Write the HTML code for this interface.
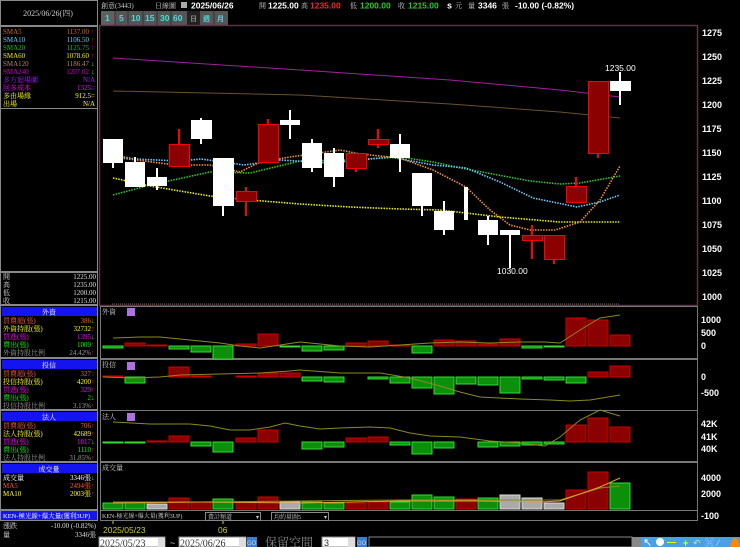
<!DOCTYPE html>
<html><head><meta charset="utf-8"><style>
html,body{margin:0;padding:0;background:#000;width:740px;height:547px;overflow:hidden}
svg{display:block;font-family:"Liberation Sans","Noto Sans CJK TC",sans-serif}
.s{font-family:"Liberation Serif","Noto Serif CJK SC",serif;font-size:7px}
.ax{font-size:9px;fill:#fff}
</style></head><body>
<svg width="740" height="547" viewBox="0 0 740 547" xmlns="http://www.w3.org/2000/svg">
<rect width="740" height="547" fill="#000"/>
<!-- left panel -->
<rect x="0.5" y="0.5" width="97" height="25" fill="#000" stroke="#888"/>
<text x="48" y="16" class="s" fill="#ccc" text-anchor="middle" style="font-size:8px">2025/06/26(四)</text>
<rect x="0.5" y="26.5" width="97" height="82" fill="#000" stroke="#888"/>
<g class="s">
<text x="3" y="34" fill="#d2691e">SMA5</text><text x="89" y="34" fill="#d2691e" text-anchor="end">1137.00</text><text x="91" y="34" fill="#f00">↑</text>
<text x="3" y="42" fill="#6cf">SMA10</text><text x="89" y="42" fill="#6cf" text-anchor="end">1106.50</text><text x="91" y="42" fill="#f00">↑</text>
<text x="3" y="50" fill="#0c0">SMA20</text><text x="89" y="50" fill="#0c0" text-anchor="end">1125.75</text><text x="91" y="50" fill="#f00">↑</text>
<text x="3" y="58" fill="#ee0">SMA60</text><text x="89" y="58" fill="#ee0" text-anchor="end">1078.60</text><text x="91" y="58" fill="#f00">↑</text>
<text x="3" y="66" fill="#b08a60">SMA120</text><text x="89" y="66" fill="#b08a60" text-anchor="end">1186.47</text><text x="91" y="66" fill="#0f0">↓</text>
<text x="3" y="74" fill="#c0c">SMA240</text><text x="89" y="74" fill="#c0c" text-anchor="end">1207.02</text><text x="91" y="74" fill="#0f0">↓</text>
<text x="3" y="82" fill="#a020f0">多方迴場圖</text><text x="95" y="82" fill="#a020f0" text-anchor="end">N/A</text>
<text x="3" y="90" fill="#f0f">回多成本</text><text x="95" y="90" fill="#f0f" text-anchor="end">1325=</text>
<text x="3" y="98" fill="#ff0">多由場緣</text><text x="95" y="98" fill="#ff0" text-anchor="end">912.5=</text>
<text x="3" y="106" fill="#ff0">出場</text><text x="95" y="106" fill="#ff0" text-anchor="end">N/A</text>
</g>
<rect x="0.5" y="108.5" width="97" height="163" fill="#000" stroke="#888"/>
<rect x="0.5" y="272.5" width="97" height="32" fill="#000" stroke="#888"/>
<g class="s" fill="#ddd">
<text x="3" y="279">開</text><text x="96" y="279" text-anchor="end">1225.00</text>
<text x="3" y="287">高</text><text x="96" y="287" text-anchor="end">1235.00</text>
<text x="3" y="295">低</text><text x="96" y="295" text-anchor="end">1200.00</text>
<text x="3" y="303">收</text><text x="96" y="303" text-anchor="end">1215.00</text>
</g>
<!-- 外資 -->
<rect x="0.5" y="305.5" width="97" height="52" fill="#000" stroke="#888"/>
<rect x="2" y="307" width="95" height="9" fill="#1414f0"/>
<g class="s">
<text x="49" y="314.5" fill="#fff" text-anchor="middle">外資</text>
<text x="3" y="323" fill="#ff5a3c">買賣超(張)</text><text x="91" y="323" fill="#ff5a3c" text-anchor="end">386</text><text x="91" y="323" fill="#0f0">↓</text>
<text x="3" y="331" fill="#ff0">外資持股(張)</text><text x="91" y="331" fill="#ff0" text-anchor="end">32732</text><text x="91" y="331" fill="#f00">↑</text>
<text x="3" y="339" fill="#f0f">買進(張)</text><text x="91" y="339" fill="#f0f" text-anchor="end">1395</text><text x="91" y="339" fill="#0f0">↓</text>
<text x="3" y="347" fill="#0f0">賣出(張)</text><text x="91" y="347" fill="#0f0" text-anchor="end">1009</text><text x="91" y="347" fill="#f00">↑</text>
<text x="3" y="355" fill="#999">外資持股比例</text><text x="91" y="355" fill="#999" text-anchor="end">24.42%</text><text x="91" y="355" fill="#f00">↑</text>
</g>
<!-- 投信 -->
<rect x="0.5" y="358.5" width="97" height="51" fill="#000" stroke="#888"/>
<rect x="2" y="360" width="95" height="9" fill="#1414f0"/>
<g class="s">
<text x="49" y="367.5" fill="#fff" text-anchor="middle">投信</text>
<text x="3" y="376" fill="#ff5a3c">買賣超(張)</text><text x="91" y="376" fill="#ff5a3c" text-anchor="end">327</text><text x="91" y="376" fill="#f00">↑</text>
<text x="3" y="384" fill="#ff0">投信持股(張)</text><text x="91" y="384" fill="#ff0" text-anchor="end">4200</text><text x="91" y="384" fill="#f00">↑</text>
<text x="3" y="392" fill="#f0f">買進(張)</text><text x="91" y="392" fill="#f0f" text-anchor="end">329</text><text x="91" y="392" fill="#f00">↑</text>
<text x="3" y="400" fill="#0f0">賣出(張)</text><text x="91" y="400" fill="#0f0" text-anchor="end">2</text><text x="91" y="400" fill="#0f0">↓</text>
<text x="3" y="408" fill="#999">投信持股比例</text><text x="91" y="408" fill="#999" text-anchor="end">3.13%</text><text x="91" y="408" fill="#f00">↑</text>
</g>
<!-- 法人 -->
<rect x="0.5" y="410.5" width="97" height="51" fill="#000" stroke="#888"/>
<rect x="2" y="412" width="95" height="9" fill="#1414f0"/>
<g class="s">
<text x="49" y="419.5" fill="#fff" text-anchor="middle">法人</text>
<text x="3" y="428" fill="#ff5a3c">買賣超(張)</text><text x="91" y="428" fill="#ff5a3c" text-anchor="end">706</text><text x="91" y="428" fill="#f00">↑</text>
<text x="3" y="436" fill="#ff0">法人持股(張)</text><text x="91" y="436" fill="#ff0" text-anchor="end">42689</text><text x="91" y="436" fill="#f00">↑</text>
<text x="3" y="444" fill="#f0f">買進(張)</text><text x="91" y="444" fill="#f0f" text-anchor="end">1817</text><text x="91" y="444" fill="#0f0">↓</text>
<text x="3" y="452" fill="#0f0">賣出(張)</text><text x="91" y="452" fill="#0f0" text-anchor="end">1110</text><text x="91" y="452" fill="#f00">↑</text>
<text x="3" y="460" fill="#999">法人持股比例</text><text x="91" y="460" fill="#999" text-anchor="end">31.85%</text><text x="91" y="460" fill="#f00">↑</text>
</g>
<!-- 成交量 -->
<rect x="0.5" y="462.5" width="97" height="47" fill="#000" stroke="#888"/>
<rect x="2" y="464" width="95" height="9" fill="#1414f0"/>
<g class="s">
<text x="49" y="471.5" fill="#fff" text-anchor="middle">成交量</text>
<text x="3" y="480" fill="#fff">成交量</text><text x="91" y="480" fill="#fff" text-anchor="end">3346張</text><text x="91" y="480" fill="#0f0">↓</text>
<text x="3" y="488" fill="#ff5a3c">MA5</text><text x="91" y="488" fill="#ff5a3c" text-anchor="end">2494張</text><text x="91" y="488" fill="#f00">↑</text>
<text x="3" y="496" fill="#ff0">MA10</text><text x="91" y="496" fill="#ff0" text-anchor="end">2003張</text><text x="91" y="496" fill="#f00">↑</text>
</g>
<rect x="0.5" y="510.5" width="97" height="10" fill="#1414f0" stroke="#888"/>
<text x="3" y="518" class="s" fill="#fff" style="font-size:6.5px">KEN-極光線+爆大量(獲利3UP)</text>
<g class="s" fill="#ddd">
<text x="3" y="528">漲跌</text><text x="96" y="528" text-anchor="end">-10.00 (-0.82%)</text>
<text x="3" y="537">量</text><text x="96" y="537" text-anchor="end">3346張</text>
</g>

<!-- header -->
<g font-size="9">
<text x="101" y="8" class="s" fill="#ccc">創意(3443)</text>
<text x="155" y="8" class="s" fill="#ccc">日線圖</text>
<rect x="181" y="2" width="6" height="6" fill="#aaa"/>
<text x="191" y="8.5" fill="#fff" font-weight="bold" font-size="8.5">2025/06/26</text>
<text x="259" y="8" class="s" fill="#ccc">開</text>
<text x="268" y="8.5" fill="#fff" font-weight="bold" font-size="8.5">1225.00</text>
<text x="301" y="8" class="s" fill="#ccc">高</text>
<text x="310" y="8.5" fill="#f22" font-weight="bold" font-size="8.5">1235.00</text>
<text x="350" y="8" class="s" fill="#ccc">低</text>
<text x="360" y="8.5" fill="#2c2" font-weight="bold" font-size="8.5">1200.00</text>
<text x="398" y="8" class="s" fill="#ccc">收</text>
<text x="408" y="8.5" fill="#2c2" font-weight="bold" font-size="8.5">1215.00</text>
<text x="447" y="8.5" fill="#fff" font-weight="bold">s</text>
<text x="455" y="8" class="s" fill="#ccc">元</text>
<text x="468" y="8" class="s" fill="#ccc">量</text>
<text x="478" y="8.5" fill="#fff" font-weight="bold" font-size="8.5">3346</text>
<text x="502" y="8" class="s" fill="#ccc">張</text>
<text x="515" y="8.5" fill="#fff" font-weight="bold" font-size="8.5">-10.00 (-0.82%)</text>
</g>
<rect x="101" y="11" width="127" height="14" fill="#555"/>
<g font-size="8.5" fill="#4dd" font-weight="bold">
<rect x="101" y="11" width="14" height="14" fill="#606060"/>
<text x="105" y="21">1</text><text x="119" y="21">5</text><text x="131" y="21">10</text><text x="145" y="21">15</text><text x="160" y="21">30</text><text x="173" y="21">60</text>
<rect x="187" y="11" width="13" height="14" fill="#222"/>
<text x="190" y="21" fill="#888" font-size="7">日</text>
<text x="203" y="21" font-size="7">週</text><text x="217" y="21" font-size="7">月</text>
</g>
<g stroke="#333"><line x1="115" y1="11" x2="115" y2="25"/><line x1="128" y1="11" x2="128" y2="25"/><line x1="143" y1="11" x2="143" y2="25"/><line x1="157" y1="11" x2="157" y2="25"/><line x1="171" y1="11" x2="171" y2="25"/><line x1="214" y1="11" x2="214" y2="25"/></g>

<!-- main frame -->
<rect x="99.5" y="25.5" width="598" height="280" fill="none" stroke="#5a3346" stroke-width="1.5"/>
<g class="ax" font-weight="bold" font-size="8.5">
<text x="702" y="36">1275</text><text x="702" y="60">1250</text><text x="702" y="84">1225</text><text x="702" y="108">1200</text>
<text x="702" y="132">1175</text><text x="702" y="156">1150</text><text x="702" y="180">1125</text><text x="702" y="204">1100</text>
<text x="702" y="228">1075</text><text x="702" y="252">1050</text><text x="702" y="276">1025</text><text x="702" y="300">1000</text>
</g>
<line x1="112" y1="304" x2="620" y2="304" stroke="#7a6a30" stroke-dasharray="1 1"/>
<polyline fill="none" stroke="#a020a0" stroke-width="1" points="113,58 300,70 450,80 560,90 620,97"/>
<polyline fill="none" stroke="#6a5030" stroke-width="1" points="113,91 300,95 450,104 560,112 620,118"/>
<g fill="none" stroke-width="1.6" stroke-dasharray="1.5 1.2">
<polyline stroke="#ee0" points="113,178 150,186 210,196 250,200 300,204 350,207 400,209 440,210 500,217 560,222 620,222"/>
<polyline stroke="#2c2" points="113,195 150,185 210,172 250,173 300,161 350,160 400,157 433,162 466,169 530,181 560,184 580,183 620,176"/>
<polyline stroke="#6cf" points="113,155 135,159 179,161 201,159 244,165 280,160 330,163 390,157 433,165 466,168 500,182 533,198 577,207 600,202 620,195"/>
<polyline stroke="#f0903a" points="113,157 175,165 210,165 240,172 260,162 290,157 340,150 360,154 400,158 433,170 466,187 490,210 510,225 530,230 555,230 580,222 600,200 620,166"/>
</g>
<g stroke-width="2">
<g stroke="#fff" fill="#fff">
<line x1="113" y1="139" x2="113" y2="168"/><rect x="103" y="139" width="20" height="24" stroke="none"/>
<line x1="135" y1="157" x2="135" y2="187"/><rect x="125" y="162" width="20" height="25" stroke="none"/>
<line x1="157" y1="168" x2="157" y2="190"/><rect x="147" y="177" width="20" height="9" stroke="none"/>
<line x1="201" y1="118" x2="201" y2="144"/><rect x="191" y="120" width="21" height="19" stroke="none"/>
<line x1="223" y1="158" x2="223" y2="216"/><rect x="213" y="158" width="21" height="48" stroke="none"/>
<line x1="290" y1="110" x2="290" y2="139"/><rect x="280" y="120" width="20" height="5" stroke="none"/>
<line x1="312" y1="139" x2="312" y2="172"/><rect x="302" y="143" width="20" height="25" stroke="none"/>
<line x1="334" y1="148" x2="334" y2="187"/><rect x="324" y="153" width="20" height="24" stroke="none"/>
<line x1="400" y1="134" x2="400" y2="172"/><rect x="390" y="144" width="20" height="14" stroke="none"/>
<line x1="422" y1="173" x2="422" y2="216"/><rect x="412" y="173" width="20" height="33" stroke="none"/>
<line x1="444" y1="201" x2="444" y2="235"/><rect x="434" y="211" width="20" height="19" stroke="none"/>
<rect x="464" y="187" width="4" height="33" stroke="none"/>
<line x1="488" y1="216" x2="488" y2="245"/><rect x="478" y="220" width="20" height="15" stroke="none"/>
<line x1="510" y1="230" x2="510" y2="268"/><rect x="500" y="230" width="20" height="5" stroke="none"/>
<line x1="620" y1="72" x2="620" y2="105"/><rect x="610" y="81" width="21" height="10" stroke="none"/>
</g>
<g stroke="#f00" fill="#8b0000">
<line x1="179" y1="129" x2="179" y2="167"/><rect x="169.5" y="144.5" width="20" height="22" stroke-width="1"/>
<line x1="246" y1="187" x2="246" y2="216"/><rect x="236.5" y="191.5" width="20" height="10" stroke-width="1"/>
<line x1="268" y1="119" x2="268" y2="163"/><rect x="258.5" y="124.5" width="20" height="38" stroke-width="1"/>
<line x1="356" y1="153" x2="356" y2="172"/><rect x="346.5" y="153.5" width="20" height="15" stroke-width="1"/>
<line x1="378" y1="129" x2="378" y2="148"/><rect x="368.5" y="139.5" width="20" height="5" stroke-width="1"/>
<line x1="532" y1="225" x2="532" y2="259"/><rect x="522.5" y="235.5" width="20" height="5" stroke-width="1"/>
<line x1="554" y1="235" x2="554" y2="264"/><rect x="544.5" y="235.5" width="20" height="24" stroke-width="1"/>
<line x1="576" y1="177" x2="576" y2="202"/><rect x="566.5" y="186.5" width="20" height="16" stroke-width="1"/>
<line x1="598" y1="81" x2="598" y2="158"/><rect x="588.5" y="81.5" width="20" height="72" stroke-width="1"/>
</g>
</g>
<text x="605" y="71" font-size="8.5" fill="#fff">1235.00</text>
<text x="497" y="274" font-size="8.5" fill="#fff">1030.00</text>

<g fill="none" stroke="#777" stroke-width="1">
<rect x="100.5" y="306.5" width="597" height="52"/>
<rect x="100.5" y="359.5" width="597" height="51"/>
<rect x="100.5" y="410.5" width="597" height="51"/>
<rect x="100.5" y="462.5" width="597" height="48"/>
<rect x="100.5" y="510.5" width="597" height="10"/>
</g>
<g class="s" fill="#ccc">
<text x="102" y="314">外資</text><text x="102" y="367">投信</text><text x="102" y="419">法人</text><text x="102" y="470">成交量</text>
</g>
<g fill="#b070e0"><rect x="127" y="308" width="8" height="8"/><rect x="127" y="362" width="8" height="8"/><rect x="127" y="413" width="8" height="8"/></g>
<g class="ax" font-weight="bold" font-size="8.5">
<text x="701" y="323">1000</text><text x="701" y="336">500</text><text x="701" y="349">0</text>
<text x="701" y="380">0</text><text x="701" y="396">-500</text>
<text x="701" y="427">42K</text><text x="701" y="440">41K</text><text x="701" y="452">40K</text>
<text x="701" y="481">4000</text><text x="701" y="497">2000</text>
<text x="701" y="519">-100</text>
</g>
<g stroke-width="1">
<g fill="#8b0000" stroke="#c00">
<rect x="125" y="343" width="20" height="3"/><rect x="147" y="345" width="20" height="1"/><rect x="236" y="344" width="20" height="2"/><rect x="258" y="334" width="20" height="12"/>
<rect x="346" y="343" width="20" height="3"/><rect x="368" y="341" width="20" height="5"/><rect x="390" y="345" width="20" height="1"/><rect x="434" y="340" width="20" height="6"/>
<rect x="456" y="341" width="20" height="5"/><rect x="478" y="344" width="20" height="2"/><rect x="500" y="339" width="20" height="7"/>
<rect x="566" y="318" width="20" height="28"/><rect x="588" y="320" width="20" height="26"/><rect x="610" y="335" width="20" height="11"/>
</g>
<g fill="#0c900c" stroke="#3d3">
<rect x="103" y="346" width="20" height="2"/><rect x="169" y="346" width="20" height="3"/><rect x="191" y="346" width="20" height="6"/><rect x="213" y="346" width="20" height="13"/>
<rect x="280" y="346" width="20" height="1"/><rect x="302" y="346" width="20" height="5"/><rect x="324" y="346" width="20" height="4"/><rect x="412" y="346" width="20" height="7"/>
<rect x="522" y="346" width="20" height="2"/><rect x="544" y="346" width="20" height="1"/>
</g>
</g>
<polyline fill="none" stroke="#8a8a20" points="113,338 140,337 160,337 190,340 220,343 240,346 260,348 280,345 300,342 320,344 340,346 370,347 400,345 430,343 460,342 490,343 520,342 545,342 560,343 580,330 600,318 620,315"/>
<g stroke-width="1">
<g fill="#8b0000" stroke="#c00">
<rect x="103" y="376" width="20" height="1"/><rect x="169" y="367" width="20" height="10"/><rect x="191" y="376" width="20" height="1"/><rect x="236" y="376" width="20" height="1"/>
<rect x="258" y="373" width="20" height="4"/><rect x="280" y="373" width="20" height="4"/><rect x="588" y="372" width="20" height="5"/><rect x="610" y="366" width="20" height="11"/>
</g>
<g fill="#0c900c" stroke="#3d3">
<rect x="125" y="377" width="20" height="6"/><rect x="302" y="377" width="20" height="4"/><rect x="324" y="377" width="20" height="5"/><rect x="368" y="377" width="20" height="2"/>
<rect x="390" y="377" width="20" height="6"/><rect x="412" y="377" width="20" height="11"/><rect x="434" y="377" width="20" height="17"/><rect x="456" y="377" width="20" height="7"/>
<rect x="478" y="377" width="20" height="8"/><rect x="500" y="377" width="20" height="16"/><rect x="522" y="377" width="20" height="2"/><rect x="544" y="377" width="20" height="3"/><rect x="566" y="377" width="20" height="6"/>
</g>
</g>
<polyline fill="none" stroke="#8a8a20" points="103,377 130,378 160,377 180,375 220,374 260,373 290,371 300,370 340,373 380,373 410,378 440,386 460,392 480,397 520,399 550,400 570,401 590,400 620,395"/>
<g stroke-width="1">
<g fill="#8b0000" stroke="#c00">
<rect x="147" y="441" width="20" height="1"/><rect x="169" y="436" width="20" height="6"/><rect x="236" y="438" width="20" height="4"/><rect x="258" y="430" width="20" height="12"/>
<rect x="346" y="438" width="20" height="4"/><rect x="368" y="437" width="20" height="5"/>
<rect x="566" y="425" width="20" height="17"/><rect x="588" y="418" width="20" height="24"/><rect x="610" y="427" width="20" height="15"/>
</g>
<g fill="#0c900c" stroke="#3d3">
<rect x="103" y="442" width="20" height="1"/><rect x="125" y="442" width="20" height="1"/><rect x="191" y="442" width="20" height="4"/><rect x="213" y="442" width="20" height="10"/>
<rect x="302" y="442" width="20" height="7"/><rect x="324" y="442" width="20" height="5"/><rect x="390" y="442" width="20" height="3"/><rect x="412" y="442" width="20" height="12"/>
<rect x="434" y="442" width="20" height="6"/><rect x="478" y="442" width="20" height="5"/><rect x="500" y="442" width="20" height="4"/><rect x="522" y="442" width="20" height="3"/><rect x="544" y="442" width="20" height="2"/>
</g>
</g>
<polyline fill="none" stroke="#8a8a20" points="113,422 150,424 190,424 210,426 230,430 250,430 270,427 285,423 300,426 320,429 340,428 370,427 390,428 410,433 430,436 460,437 490,441 520,443 545,446 560,437 580,420 600,410 620,416"/>
<g stroke-width="1">
<g fill="#8b0000" stroke="#c00">
<rect x="169" y="498" width="20" height="11"/><rect x="191" y="502" width="20" height="7"/><rect x="236" y="502" width="20" height="7"/><rect x="258" y="497" width="20" height="12"/>
<rect x="346" y="503" width="20" height="6"/><rect x="368" y="502" width="20" height="7"/><rect x="456" y="499" width="20" height="10"/>
<rect x="566" y="490" width="20" height="19"/><rect x="588" y="472" width="20" height="37"/>
</g>
<g fill="#0c900c" stroke="#3d3">
<rect x="103" y="503" width="20" height="6"/><rect x="125" y="502" width="20" height="7"/><rect x="213" y="499" width="20" height="10"/><rect x="302" y="502" width="20" height="7"/>
<rect x="324" y="503" width="20" height="6"/><rect x="390" y="502" width="20" height="7"/><rect x="412" y="495" width="20" height="14"/><rect x="434" y="497" width="20" height="12"/>
<rect x="478" y="498" width="20" height="11"/><rect x="610" y="483" width="20" height="26"/>
</g>
<g fill="#aaa" stroke="#ddd">
<rect x="147" y="504" width="20" height="5"/><rect x="280" y="502" width="20" height="7"/><rect x="500" y="495" width="20" height="14"/><rect x="522" y="498" width="20" height="11"/><rect x="544" y="503" width="20" height="6"/>
</g>
</g>
<polyline fill="none" stroke="#8a8a20" points="113,502 200,502 300,501 400,500 480,500 540,500 560,500 580,494 600,488 620,486"/>
<polyline fill="none" stroke="#e0a030" points="113,503 200,502 300,503 400,501 480,501 540,502 560,501 580,494 600,487 620,478"/>
<text x="102" y="518" class="s" fill="#ccc" style="font-size:6px">KEN-極光線+爆大量(獲利3UP)</text>
<rect x="205.5" y="512.5" width="55" height="8" fill="#000" stroke="#888"/>
<text x="208" y="519" class="s" fill="#ccc" style="font-size:6px">費計頻道</text><text x="256" y="519" fill="#ccc" font-size="6">▾</text>
<rect x="271.5" y="512.5" width="57" height="8" fill="#000" stroke="#888"/>
<text x="274" y="519" class="s" fill="#ccc" style="font-size:6px">均約量圖5</text><text x="324" y="519" fill="#ccc" font-size="6">▾</text>
<line x1="113" y1="521" x2="113" y2="524" stroke="#cc3"/><line x1="223" y1="521" x2="223" y2="524" stroke="#cc3"/>
<text x="103" y="533" font-size="8.5" fill="#cc3">2025/05/23</text>
<text x="218" y="533" font-size="8.5" fill="#cc3">06</text>
<rect x="99" y="537" width="66" height="10" fill="#fff" stroke="#888"/>
<text x="100" y="546.5" fill="#333" class="s" style="font-size:10px">2025/05/23</text>
<rect x="158" y="538" width="7" height="9" fill="#ddd"/>
<text x="170" y="546" fill="#ccc" font-size="9">~</text>
<rect x="179" y="537" width="67" height="10" fill="#fff" stroke="#888"/>
<text x="180" y="546.5" fill="#333" class="s" style="font-size:10px">2025/06/26</text>
<rect x="239" y="538" width="7" height="9" fill="#ddd"/>
<rect x="247" y="537" width="10" height="10" fill="#3a7fd0"/><text x="247" y="545" font-size="6" fill="#cce">GO</text>
<text x="265" y="546.5" fill="#888" class="s" style="font-size:12px">保留空間</text>
<rect x="322" y="537" width="33" height="10" fill="#fff" stroke="#888"/>
<text x="324" y="546" font-size="9" fill="#333">3</text>
<rect x="348" y="538" width="7" height="9" fill="#ddd"/>
<rect x="357" y="537" width="10" height="10" fill="#3a7fd0"/><text x="357" y="545" font-size="6" fill="#cce">GO</text>
<rect x="369" y="537" width="263" height="10" fill="#000" stroke="#888"/>
<rect x="632" y="537" width="108" height="10" fill="#4aa0e0"/>
<rect x="632" y="537" width="9" height="10" fill="#888"/>
<g font-size="9" font-weight="bold">
<text x="643" y="546" fill="#fff">↖</text>
<circle cx="660" cy="542" r="4" fill="#fff"/><text x="667" y="545" fill="#ff0">—</text>
<text x="683" y="546" fill="#ff0">+</text><text x="693" y="546" fill="#9cf">↶</text><text x="705" y="546" fill="#9cf">⌘</text><text x="717" y="546" fill="#9cf">⁄</text>
<path d="M730 547 L732 540 Q735 536 738 540 L740 547Z" fill="#f80"/>
</g>
</svg>
</body></html>
